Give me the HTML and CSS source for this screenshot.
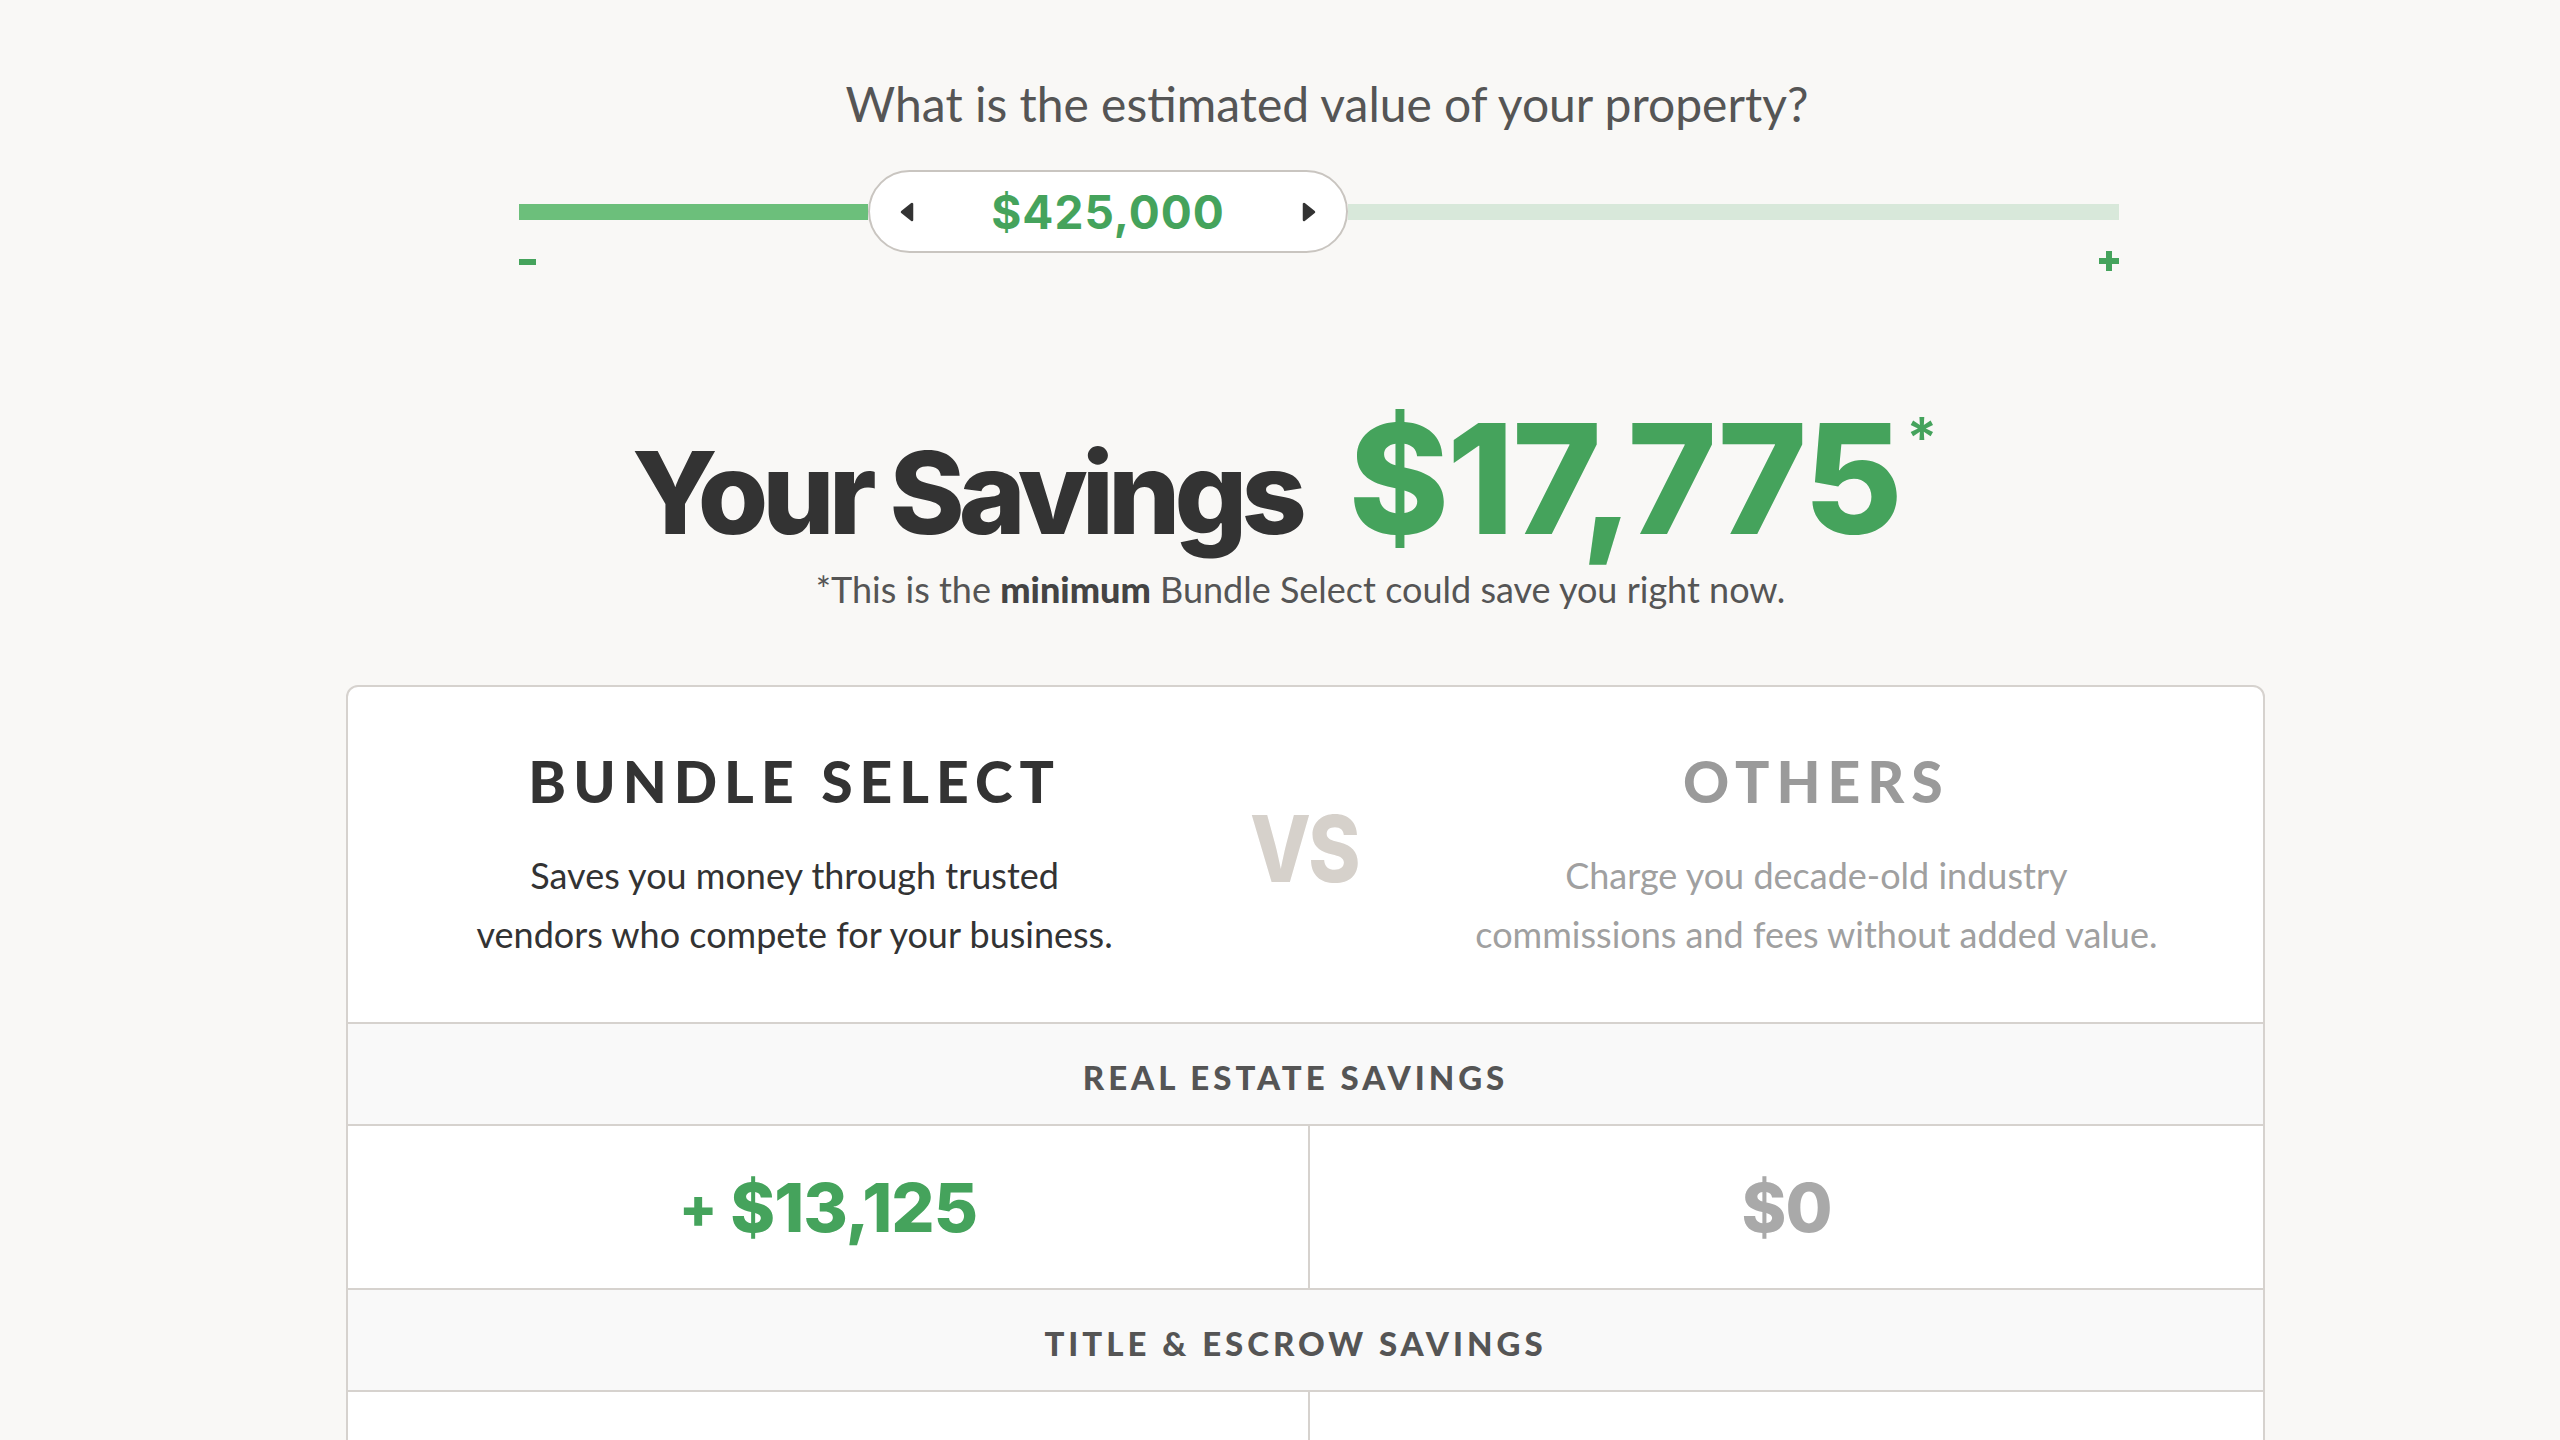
FILE: index.html
```html
<!DOCTYPE html>
<html lang="en">
<head>
<meta charset="utf-8">
<title>Savings Calculator</title>
<link rel="stylesheet" href="styles.css">
</head>
<body>
<main class="page">
  <section class="estimator">
    <h2 class="question">What is the estimated value of your property?</h2>
    <div class="slider">
      <div class="track track-fill"></div>
      <div class="thumb">
        <svg class="arrow" viewBox="0 0 14 20" width="14" height="20"><polygon points="12,2 12,18 2,10" fill="#333" stroke="#333" stroke-width="2.5" stroke-linejoin="round"/></svg>
        <span class="thumb-value">$425,000</span>
        <svg class="arrow" viewBox="0 0 14 20" width="14" height="20"><polygon points="2,2 2,18 12,10" fill="#333" stroke="#333" stroke-width="2.5" stroke-linejoin="round"/></svg>
      </div>
      <div class="track track-empty"></div>
    </div>
    <div class="slider-ends">
      <svg class="end-icon" viewBox="0 0 20 20" width="20" height="20"><rect x="0" y="8" width="17" height="6" fill="#45a35c"/></svg>
      <svg class="end-icon" viewBox="0 0 20 20" width="20" height="20"><rect x="0" y="7" width="20" height="6" fill="#45a35c"/><rect x="7" y="0" width="6" height="20" fill="#45a35c"/></svg>
    </div>
  </section>

  <section class="savings">
    <h1 class="savings-title">
      <span class="savings-label">Your Savings</span>
      <span class="savings-amount">$17,775<sup class="star">*</sup></span>
    </h1>
    <p class="savings-note">*This is the <b>minimum</b> Bundle Select could save you right now.</p>
  </section>

  <section class="card">
    <div class="compare">
      <div class="compare-col">
        <h3 class="compare-title">BUNDLE SELECT</h3>
        <p class="compare-desc">Saves you money through trusted<br>vendors who compete for your business.</p>
      </div>
      <div class="vs">VS</div>
      <div class="compare-col compare-col--others">
        <h3 class="compare-title compare-title--others">OTHERS</h3>
        <p class="compare-desc compare-desc--others">Charge you decade-old industry<br>commissions and fees without added value.</p>
      </div>
    </div>

    <div class="row-head">REAL ESTATE SAVINGS</div>
    <div class="row-values">
      <div class="cell"><span class="value value--ours"><span class="plus">+</span> $13,125</span></div>
      <div class="cell cell--right"><span class="value value--theirs">$0</span></div>
    </div>

    <div class="row-head">TITLE &amp; ESCROW SAVINGS</div>
    <div class="row-values">
      <div class="cell"></div>
      <div class="cell cell--right"></div>
    </div>
  </section>
</main>
</body>
</html>
```

FILE: styles.css
```css
* { box-sizing: border-box; }

html, body {
  margin: 0;
  padding: 0;
  background: #f9f8f6;
}

body {
  font-family: "Lato", "Liberation Sans", sans-serif;
  color: #333;
}

.page {
  width: 1919px;
  margin-left: 346px;
  padding-top: 74px;
}

/* ---------- estimator ---------- */
.estimator {
  width: 1600px;
  margin-left: 173px;
}

.question {
  margin: 0;
  font-weight: 400;
  font-size: 48px;
  line-height: 60px;
  color: #555;
  text-align: center;
  padding-left: 16px;
}

.slider {
  margin-top: 36px;
  display: flex;
  align-items: center;
  height: 83px;
}

.track {
  height: 16px;
}

.track-fill {
  width: 349px;
  background: #6cbf7b;
}

.track-empty {
  flex: 1;
  background: #d8e8da;
}

.thumb {
  width: 480px;
  height: 83px;
  border: 2px solid #c9c5c0;
  border-radius: 42px;
  background: #fff;
  display: flex;
  align-items: center;
  justify-content: space-between;
  padding: 0 30px;
}

.arrow { display: block; }

.thumb-value {
  font-family: "Inter", "Lato", sans-serif;
  font-weight: 700;
  font-size: 46px;
  letter-spacing: 1px;
  color: #45a35c;
}

.slider-ends {
  display: flex;
  justify-content: space-between;
  margin-top: -2px;
}

.end-icon { display: block; }

/* ---------- savings ---------- */
.savings {
  text-align: center;
}

.savings-title {
  margin: 0;
  margin-top: 132px;
  display: flex;
  justify-content: center;
  align-items: baseline;
  gap: 48px;
  line-height: 1;
  padding-right: 42px;
  font-family: "Inter", "Lato", sans-serif;
  font-weight: 800;
}

.savings-label {
  font-size: 114px;
  letter-spacing: -6px;
  color: #333;
}

.savings-amount {
  font-size: 152px;
  letter-spacing: -2px;
  color: #45a35c;
  position: relative;
}

.star {
  font-size: 56px;
  font-weight: 600;
  vertical-align: top;
  position: relative;
  top: 7px;
  margin-left: 6px;
  letter-spacing: 0;
}

.savings-note {
  margin: 12px 0 0;
  font-size: 36px;
  line-height: 44px;
  color: #555;
  padding-right: 10px;
}

.savings-note b {
  font-weight: 900;
  color: #444;
}

/* ---------- card ---------- */
.card {
  margin-top: 74px;
  background: #fff;
  border: 2px solid #d6d2ce;
  border-radius: 12px 12px 0 0;
  overflow: hidden;
}

.compare {
  display: grid;
  grid-template-columns: 1fr auto 1fr;
  align-items: center;
  height: 337px;
  border-bottom: 2px solid #d6d2ce;
  padding-top: 8px;
}

.compare-col {
  text-align: center;
}

.compare-title {
  margin: 0;
  font-weight: 900;
  font-size: 57px;
  line-height: 57px;
  letter-spacing: 7px;
  color: #333;
}

.compare-title--others {
  color: #9a9a9a;
}

.compare-desc {
  margin: 36px 0 0;
  font-size: 36px;
  line-height: 59px;
  font-weight: 400;
  color: #333;
}

.compare-desc--others {
  color: #a0a0a0;
}

.vs {
  font-family: "Inter", "Lato", sans-serif;
  font-weight: 800;
  font-size: 92px;
  letter-spacing: -3px;
  color: #d6d1cb;
  line-height: 1;
  padding-right: 3px;
  margin-top: -20px;
  transform: scaleX(0.86);
}

.row-head {
  height: 102px;
  background: #f9f9f9;
  border-bottom: 2px solid #d6d2ce;
  display: flex;
  align-items: center;
  justify-content: center;
  font-weight: 900;
  font-size: 33px;
  letter-spacing: 4px;
  color: #555;
  padding-right: 20px;
  padding-top: 5px;
}

.row-values {
  display: grid;
  grid-template-columns: 960px 1fr;
  height: 164px;
  border-bottom: 2px solid #d6d2ce;
}

.cell {
  display: flex;
  align-items: center;
  justify-content: center;
}

.cell--right {
  border-left: 2px solid #d6d2ce;
}

.value {
  font-family: "Inter", "Lato", sans-serif;
  font-weight: 800;
  font-size: 68px;
  letter-spacing: -1px;
}

.value--ours { color: #45a35c; }
.value--theirs { color: #a9a9a9; }

.plus {
  font-size: 56px;
  vertical-align: 4px;
}
```
